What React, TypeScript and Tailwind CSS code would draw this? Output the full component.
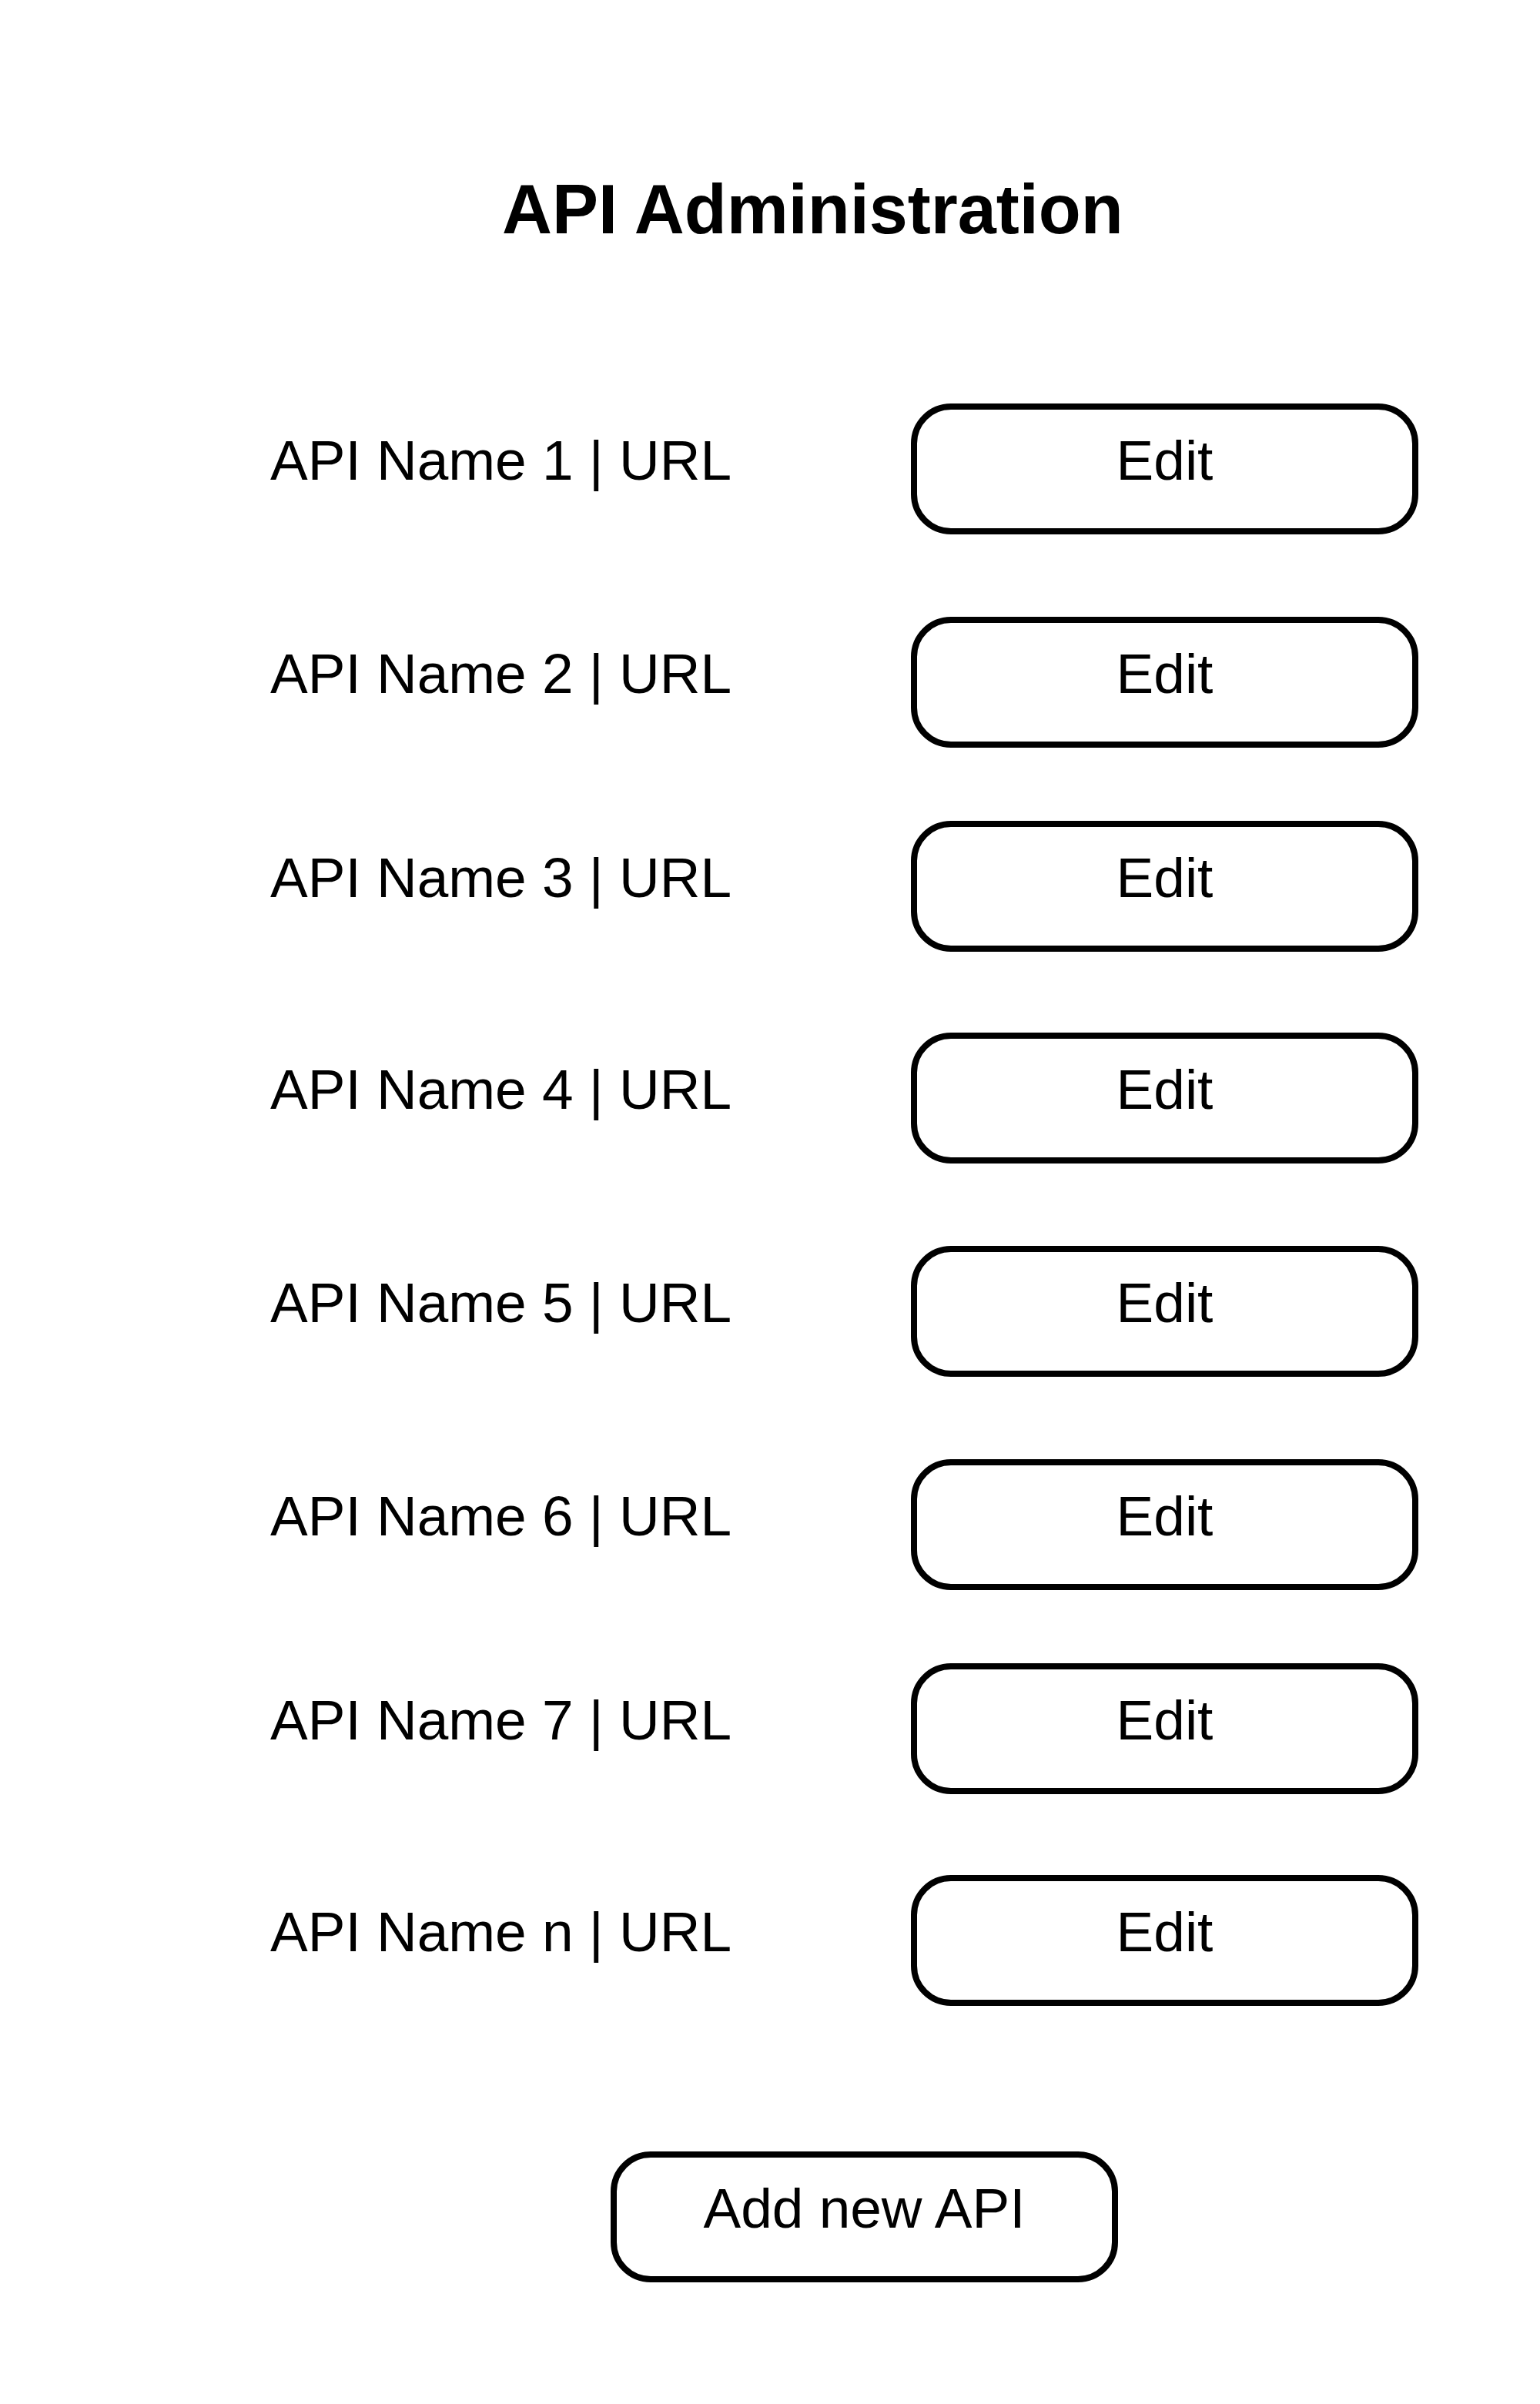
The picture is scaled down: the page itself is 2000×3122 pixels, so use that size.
import React from 'react';

type ApiRow = {
  name: string;
  gap: string;
};

const rows: ApiRow[] = [
  { name: 'API Name 1', gap: 'mt-[207px]' },
  { name: 'API Name 2', gap: 'mt-[107px]' },
  { name: 'API Name 3', gap: 'mt-[95px]' },
  { name: 'API Name 4', gap: 'mt-[105px]' },
  { name: 'API Name 5', gap: 'mt-[107px]' },
  { name: 'API Name 6', gap: 'mt-[107px]' },
  { name: 'API Name 7', gap: 'mt-[95px]' },
  { name: 'API Name n', gap: 'mt-[105px]' },
];

// Rounded outline button used for "Edit" and "Add new API"
const OutlineButton = ({ label }: { label: string }) => (
  <button className="w-[659px] h-[170px] shrink-0 border-[8px] border-black rounded-[52px] bg-white flex items-center justify-center pb-[24px] text-[73px] leading-none text-black">
    {label}
  </button>
);

export default function App() {
  return (
    <div
      className="min-h-[3122px] w-full bg-white text-black pt-[227px]"
      style={{ fontFamily: '"Liberation Sans", Arial, sans-serif' }}
    >
      <h1 className="ml-[652px] text-[90px] font-bold leading-none whitespace-nowrap">API Administration</h1>

      <div className="flex flex-col pl-[351px]">
        {rows.map((row) => (
          <div key={row.name} className={`flex items-center ${row.gap}`}>
            <span className="w-[832px] shrink-0 text-[73px] leading-none pb-[24px] whitespace-nowrap">
              {row.name} | URL
            </span>
            <OutlineButton label="Edit" />
          </div>
        ))}
      </div>

      <div className="mt-[189px] pl-[793px]">
        <OutlineButton label="Add new API" />
      </div>
    </div>
  );
}
